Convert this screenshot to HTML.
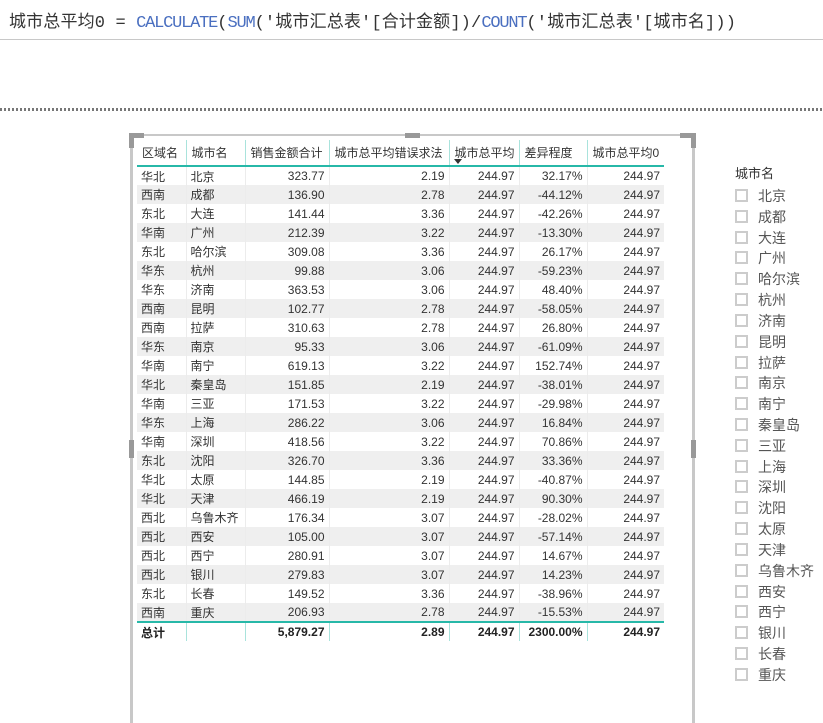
<!DOCTYPE html>
<html><head><meta charset="utf-8"><style>
*{margin:0;padding:0;box-sizing:border-box}
body{width:823px;height:723px;background:#fff;position:relative;overflow:hidden;font-family:"Liberation Sans","Noto Sans CJK SC",sans-serif}
.f{position:absolute;left:9px;top:7px;font-family:"Liberation Mono","Noto Sans CJK SC",monospace;font-size:17px;color:#333;white-space:nowrap;letter-spacing:0.15px}
.f .k{color:#4a6fc0;letter-spacing:-1.2px}
.hl{position:absolute;left:0;top:39px;width:823px;height:1px;background:#c8c8c8}
.dot{position:absolute;left:0;top:108px;width:823px;height:3px;background:repeating-linear-gradient(90deg,#777 0 2px,transparent 2px 4px)}
.b{position:absolute;background:#c8c8c8}
.h{position:absolute;background:#999}
table{position:absolute;left:137px;top:140px;border-collapse:collapse;font-size:12px;color:#333;table-layout:fixed}
td,th{height:19px;padding:0 4px;white-space:nowrap;border-left:1px solid #ececec;font-weight:normal}
td:first-child,th:first-child{border-left:none}
th{height:26px;text-align:left;border-left:1px solid #a9e3dc;border-bottom:2px solid #27b8a8;vertical-align:middle;position:relative;padding-left:5px}
th:first-child{border-left:none}
td.n{text-align:right}
tr.g td{background:#efefef}
tr.t td{font-weight:bold;border-top:2px solid #27b8a8;border-left:1px solid #a9e3dc;color:#222}
tr.t td:first-child{border-left:none}
.arr{position:absolute;left:4px;bottom:1px;width:0;height:0;border-left:4px solid transparent;border-right:4px solid transparent;border-top:5px solid #333}
.sl{position:absolute;left:735px;top:163px;font-size:13px;color:#333}
.it{position:absolute;left:735px;font-size:14px;color:#555;height:20px;line-height:20px}
.it i{position:absolute;left:0;top:3px;width:13px;height:13px;border:2px solid #ccc;background:#fff}
.it span{position:absolute;left:23px;white-space:nowrap}
</style></head><body>
<div class="f">城市总平均0 = <span class="k">CALCULATE</span>(<span class="k">SUM</span>('城市汇总表'[合计金额])/<span class="k">COUNT</span>('城市汇总表'[城市名]))</div>
<div class="hl"></div>
<div class="dot"></div>
<div class="b" style="left:130px;top:134px;width:565px;height:2px"></div>
<div class="b" style="left:130px;top:134px;width:3px;height:589px"></div>
<div class="b" style="left:692px;top:134px;width:3px;height:589px"></div>
<div class="h" style="left:129px;top:133px;width:15px;height:5px"></div>
<div class="h" style="left:129px;top:133px;width:5px;height:15px"></div>
<div class="h" style="left:405px;top:133px;width:15px;height:5px"></div>
<div class="h" style="left:680px;top:133px;width:16px;height:5px"></div>
<div class="h" style="left:691px;top:133px;width:5px;height:15px"></div>
<div class="h" style="left:129px;top:440px;width:5px;height:18px"></div>
<div class="h" style="left:691px;top:440px;width:5px;height:18px"></div>
<table>
<colgroup><col style="width:49px"><col style="width:59px"><col style="width:84px"><col style="width:120px"><col style="width:70px"><col style="width:68px"><col style="width:77px"></colgroup>
<tr><th>区域名</th><th>城市名</th><th>销售金额合计</th><th>城市总平均错误求法</th><th>城市总平均<span class="arr"></span></th><th>差异程度</th><th>城市总平均0</th></tr>
<tr><td>华北</td><td>北京</td><td class="n">323.77</td><td class="n">2.19</td><td class="n">244.97</td><td class="n">32.17%</td><td class="n">244.97</td></tr>
<tr class="g"><td>西南</td><td>成都</td><td class="n">136.90</td><td class="n">2.78</td><td class="n">244.97</td><td class="n">-44.12%</td><td class="n">244.97</td></tr>
<tr><td>东北</td><td>大连</td><td class="n">141.44</td><td class="n">3.36</td><td class="n">244.97</td><td class="n">-42.26%</td><td class="n">244.97</td></tr>
<tr class="g"><td>华南</td><td>广州</td><td class="n">212.39</td><td class="n">3.22</td><td class="n">244.97</td><td class="n">-13.30%</td><td class="n">244.97</td></tr>
<tr><td>东北</td><td>哈尔滨</td><td class="n">309.08</td><td class="n">3.36</td><td class="n">244.97</td><td class="n">26.17%</td><td class="n">244.97</td></tr>
<tr class="g"><td>华东</td><td>杭州</td><td class="n">99.88</td><td class="n">3.06</td><td class="n">244.97</td><td class="n">-59.23%</td><td class="n">244.97</td></tr>
<tr><td>华东</td><td>济南</td><td class="n">363.53</td><td class="n">3.06</td><td class="n">244.97</td><td class="n">48.40%</td><td class="n">244.97</td></tr>
<tr class="g"><td>西南</td><td>昆明</td><td class="n">102.77</td><td class="n">2.78</td><td class="n">244.97</td><td class="n">-58.05%</td><td class="n">244.97</td></tr>
<tr><td>西南</td><td>拉萨</td><td class="n">310.63</td><td class="n">2.78</td><td class="n">244.97</td><td class="n">26.80%</td><td class="n">244.97</td></tr>
<tr class="g"><td>华东</td><td>南京</td><td class="n">95.33</td><td class="n">3.06</td><td class="n">244.97</td><td class="n">-61.09%</td><td class="n">244.97</td></tr>
<tr><td>华南</td><td>南宁</td><td class="n">619.13</td><td class="n">3.22</td><td class="n">244.97</td><td class="n">152.74%</td><td class="n">244.97</td></tr>
<tr class="g"><td>华北</td><td>秦皇岛</td><td class="n">151.85</td><td class="n">2.19</td><td class="n">244.97</td><td class="n">-38.01%</td><td class="n">244.97</td></tr>
<tr><td>华南</td><td>三亚</td><td class="n">171.53</td><td class="n">3.22</td><td class="n">244.97</td><td class="n">-29.98%</td><td class="n">244.97</td></tr>
<tr class="g"><td>华东</td><td>上海</td><td class="n">286.22</td><td class="n">3.06</td><td class="n">244.97</td><td class="n">16.84%</td><td class="n">244.97</td></tr>
<tr><td>华南</td><td>深圳</td><td class="n">418.56</td><td class="n">3.22</td><td class="n">244.97</td><td class="n">70.86%</td><td class="n">244.97</td></tr>
<tr class="g"><td>东北</td><td>沈阳</td><td class="n">326.70</td><td class="n">3.36</td><td class="n">244.97</td><td class="n">33.36%</td><td class="n">244.97</td></tr>
<tr><td>华北</td><td>太原</td><td class="n">144.85</td><td class="n">2.19</td><td class="n">244.97</td><td class="n">-40.87%</td><td class="n">244.97</td></tr>
<tr class="g"><td>华北</td><td>天津</td><td class="n">466.19</td><td class="n">2.19</td><td class="n">244.97</td><td class="n">90.30%</td><td class="n">244.97</td></tr>
<tr><td>西北</td><td>乌鲁木齐</td><td class="n">176.34</td><td class="n">3.07</td><td class="n">244.97</td><td class="n">-28.02%</td><td class="n">244.97</td></tr>
<tr class="g"><td>西北</td><td>西安</td><td class="n">105.00</td><td class="n">3.07</td><td class="n">244.97</td><td class="n">-57.14%</td><td class="n">244.97</td></tr>
<tr><td>西北</td><td>西宁</td><td class="n">280.91</td><td class="n">3.07</td><td class="n">244.97</td><td class="n">14.67%</td><td class="n">244.97</td></tr>
<tr class="g"><td>西北</td><td>银川</td><td class="n">279.83</td><td class="n">3.07</td><td class="n">244.97</td><td class="n">14.23%</td><td class="n">244.97</td></tr>
<tr><td>东北</td><td>长春</td><td class="n">149.52</td><td class="n">3.36</td><td class="n">244.97</td><td class="n">-38.96%</td><td class="n">244.97</td></tr>
<tr class="g"><td>西南</td><td>重庆</td><td class="n">206.93</td><td class="n">2.78</td><td class="n">244.97</td><td class="n">-15.53%</td><td class="n">244.97</td></tr>
<tr class="t"><td>总计</td><td></td><td class="n">5,879.27</td><td class="n">2.89</td><td class="n">244.97</td><td class="n">2300.00%</td><td class="n">244.97</td></tr>
</table>
<div class="sl">城市名</div>
<div class="it" style="top:186px"><i></i><span>北京</span></div>
<div class="it" style="top:207px"><i></i><span>成都</span></div>
<div class="it" style="top:228px"><i></i><span>大连</span></div>
<div class="it" style="top:248px"><i></i><span>广州</span></div>
<div class="it" style="top:269px"><i></i><span>哈尔滨</span></div>
<div class="it" style="top:290px"><i></i><span>杭州</span></div>
<div class="it" style="top:311px"><i></i><span>济南</span></div>
<div class="it" style="top:332px"><i></i><span>昆明</span></div>
<div class="it" style="top:353px"><i></i><span>拉萨</span></div>
<div class="it" style="top:373px"><i></i><span>南京</span></div>
<div class="it" style="top:394px"><i></i><span>南宁</span></div>
<div class="it" style="top:415px"><i></i><span>秦皇岛</span></div>
<div class="it" style="top:436px"><i></i><span>三亚</span></div>
<div class="it" style="top:457px"><i></i><span>上海</span></div>
<div class="it" style="top:477px"><i></i><span>深圳</span></div>
<div class="it" style="top:498px"><i></i><span>沈阳</span></div>
<div class="it" style="top:519px"><i></i><span>太原</span></div>
<div class="it" style="top:540px"><i></i><span>天津</span></div>
<div class="it" style="top:561px"><i></i><span>乌鲁木齐</span></div>
<div class="it" style="top:582px"><i></i><span>西安</span></div>
<div class="it" style="top:602px"><i></i><span>西宁</span></div>
<div class="it" style="top:623px"><i></i><span>银川</span></div>
<div class="it" style="top:644px"><i></i><span>长春</span></div>
<div class="it" style="top:665px"><i></i><span>重庆</span></div>
</body></html>
